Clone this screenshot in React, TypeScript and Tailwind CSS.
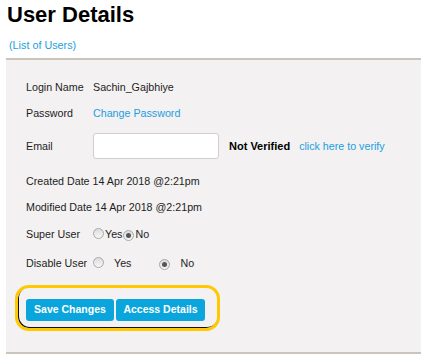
import React from "react";

const Radio = ({ checked }: { checked?: boolean }) => (
	<span className="inline-flex items-center justify-center w-[11px] h-[11px] rounded-full border border-[#a9a9a9] bg-gradient-to-b from-[#dcdcdc] to-[#f7f7f7]">
		{checked && <span className="w-[5px] h-[5px] rounded-full bg-[#555]" />}
	</span>
);

const Row = ({ label, h, children }: { label: string; h: string; children?: React.ReactNode }) => (
	<div className={`flex items-center pl-[20px] ${h}`}>
		<span className="w-[67px] shrink-0">{label}</span>
		{children}
	</div>
);

export default function App() {
	return (
		<div className="w-[421px] h-[358px] bg-white text-[#1d1d1d] font-['Liberation_Sans',Arial,sans-serif] overflow-hidden">
			<h1 className="pl-[7px] pt-[2px] text-[22px] leading-[26px] font-bold text-black">User Details</h1>
			<a className="block pl-[9px] mt-[11px] text-[10.8px] leading-[13px] text-[#1a9fe0]">(List of Users)</a>

			<div className="ml-[6px] mt-[6px] h-[296px] bg-[#f3f1f1] border-t-2 border-b-2 border-[#cbc4ba] text-[10.7px] pt-[14px]">
				<Row label="Login Name" h="h-[26px]">
					<span>Sachin_Gajbhiye</span>
				</Row>
				<Row label="Password" h="h-[26px]">
					<span className="text-[#1a9fe0]">Change Password</span>
				</Row>
				<Row label="Email" h="h-[40px]">
					<input className="w-[126px] h-[26px] bg-white border border-[#cfcfcf] rounded-[3px] outline-none" />
					<span className="ml-[10px] font-bold text-black text-[11px]">Not Verified</span>
					<span className="ml-[9px] text-[#1a9fe0]">click here to verify</span>
				</Row>
				<div className="flex items-center pl-[20px] h-[30px]">
					<span>Created Date&nbsp;14 Apr 2018 @2:21pm</span>
				</div>
				<div className="flex items-center pl-[20px] h-[22px]">
					<span>Modified Date&nbsp;14 Apr 2018 @2:21pm</span>
				</div>
				<Row label="Super User" h="h-[32px]">
					<span className="flex items-center">
						<Radio />
						<span className="ml-[1px]">Yes</span>
						<span className="ml-[1px]"><Radio checked /></span>
						<span className="ml-[1px]">No</span>
					</span>
				</Row>
				<Row label="Disable User" h="h-[26px]">
					<span className="flex items-center">
						<Radio />
						<span className="ml-[10px]">Yes</span>
						<span className="ml-[28px]"><Radio checked /></span>
						<span className="ml-[10px]">No</span>
					</span>
				</Row>

				<div className="ml-[9px] mt-[9px] w-[205px] h-[46px] border-[3px] border-[#ffc800] rounded-[14px] shadow-[inset_1px_-1px_0_#111] pl-[8px] pt-[11px] flex gap-[2px]">
					<button className="h-[22px] w-[88px] rounded-[3px] bg-[#0aa5dc] text-white font-bold text-[10.5px]">Save Changes</button>
					<button className="h-[22px] w-[89px] rounded-[3px] bg-[#0aa5dc] text-white font-bold text-[10.5px]">Access Details</button>
				</div>
			</div>
		</div>
	);
}
